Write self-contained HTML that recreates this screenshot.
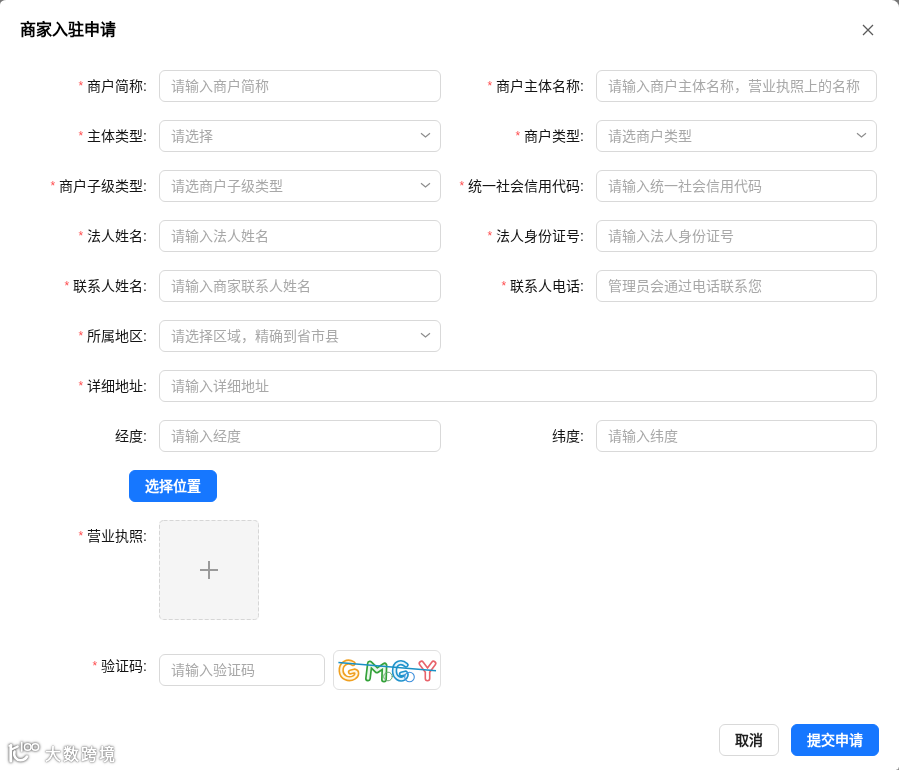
<!DOCTYPE html>
<html lang="zh-CN"><head><meta charset="utf-8">
<style>
*{box-sizing:border-box;margin:0;padding:0}
html,body{width:899px;height:770px;overflow:hidden;background:#fff}
body{position:relative;font-family:"Liberation Sans",sans-serif;font-size:14px;color:#141414}
.corner{position:absolute;width:10px;height:10px;background:#777}
.modal{will-change:transform;position:absolute;left:0;top:0;width:899px;height:770px;background:#fff;border-radius:6.5px 7.5px 0 0 / 4.5px 7.5px 0 0}
.title{position:absolute;left:20px;top:19px;font-size:16px;font-weight:bold;line-height:22px;color:#000}
.close{position:absolute;left:860px;top:22px;width:16px;height:16px}
.lbl{position:absolute;height:32px;line-height:32px;text-align:right;white-space:nowrap}
.lbl .req{color:#ff4d4f;margin-right:4px;font-size:12px;position:relative;top:-1px}
.lbl .c{margin-left:0}
.inp{position:absolute;height:32px;border:1px solid #d9d9d9;border-radius:6px;padding:0 11px;line-height:30px;color:#a8a8a8;white-space:nowrap;overflow:hidden;background:#fff}
.sel svg{position:absolute;left:259.5px;top:11px}
.btn{position:absolute;height:32px;border-radius:6px;line-height:30px;text-align:center;font-weight:bold}
.primary{background:#1677ff;color:#fff;border:1px solid #1677ff}
.default{background:#fff;color:rgba(0,0,0,0.88);border:1px solid #d9d9d9}
.upload{position:absolute;left:159px;top:520px;width:100px;height:100px;border-radius:4px;background:#f5f5f5}
</style></head><body>
<div class="corner" style="left:0;top:0"></div>
<div class="corner" style="right:0;top:0"></div>

<div class="modal">
<div class="title">商家入驻申请</div>
<svg class="close" viewBox="0 0 16 16"><path d="M3 3L13 13M13 3L3 13" stroke="#5a5a5a" stroke-width="1.25" fill="none"/></svg>

<!-- left column -->
<div class="lbl" style="right:752px;top:70px"><span class="req">*</span>商户简称<span class="c">:</span></div>
<div class="inp" style="left:159px;top:70px;width:282px">请输入商户简称</div>

<div class="lbl" style="right:752px;top:120px"><span class="req">*</span>主体类型<span class="c">:</span></div>
<div class="inp sel" style="left:159px;top:120px;width:282px">请选择<svg class="chev" width="11" height="7" viewBox="0 0 11 7"><path d="M1 1.2L5.5 5L10 1.2" stroke="#8c8c8c" stroke-width="1.15" fill="none"/></svg></div>

<div class="lbl" style="right:752px;top:170px"><span class="req">*</span>商户子级类型<span class="c">:</span></div>
<div class="inp sel" style="left:159px;top:170px;width:282px">请选商户子级类型<svg class="chev" width="11" height="7" viewBox="0 0 11 7"><path d="M1 1.2L5.5 5L10 1.2" stroke="#8c8c8c" stroke-width="1.15" fill="none"/></svg></div>

<div class="lbl" style="right:752px;top:220px"><span class="req">*</span>法人姓名<span class="c">:</span></div>
<div class="inp" style="left:159px;top:220px;width:282px">请输入法人姓名</div>

<div class="lbl" style="right:752px;top:270px"><span class="req">*</span>联系人姓名<span class="c">:</span></div>
<div class="inp" style="left:159px;top:270px;width:282px">请输入商家联系人姓名</div>

<div class="lbl" style="right:752px;top:320px"><span class="req">*</span>所属地区<span class="c">:</span></div>
<div class="inp sel" style="left:159px;top:320px;width:282px">请选择区域，精确到省市县<svg class="chev" width="11" height="7" viewBox="0 0 11 7"><path d="M1 1.2L5.5 5L10 1.2" stroke="#8c8c8c" stroke-width="1.15" fill="none"/></svg></div>

<div class="lbl" style="right:752px;top:370px"><span class="req">*</span>详细地址<span class="c">:</span></div>
<div class="inp" style="left:159px;top:370px;width:718px">请输入详细地址</div>

<div class="lbl" style="right:752px;top:420px">经度<span class="c">:</span></div>
<div class="inp" style="left:159px;top:420px;width:282px">请输入经度</div>

<div class="btn primary" style="left:129px;top:470px;width:88px">选择位置</div>

<div class="lbl" style="right:752px;top:520px"><span class="req">*</span>营业执照<span class="c">:</span></div>
<div class="upload"><svg width="100" height="100" style="position:absolute;left:0;top:0"><rect x="0.5" y="0.5" width="99" height="99" rx="4" fill="none" stroke="#d6d6d6" stroke-dasharray="4 2"/></svg><svg width="20" height="20" viewBox="0 0 20 20" style="position:absolute;left:40px;top:40px"><path d="M10 1V19M1 10H19" stroke="#9a9a9a" stroke-width="2" fill="none"/></svg></div>

<div class="lbl" style="right:752px;top:650px"><span class="req">*</span>验证码<span class="c">:</span></div>
<div class="inp" style="left:159px;top:654px;width:166px">请输入验证码</div>
<div style="position:absolute;left:333px;top:650px;width:108px;height:40px;border:1px solid #e0e0e0;border-radius:6px;background:#fff"></div>
<svg style="position:absolute;left:333px;top:650px" width="108" height="40" viewBox="0 0 108 40">
<g fill="none" stroke-linecap="round" stroke-linejoin="round">
<path d="M20 13.5C14.5 10,7.8 13.5,8.2 21C8.6 27.5,15.5 30.5,21 27.5C24.5 25.5,24.5 21.5,21.5 21L17.5 22" stroke="#f0a020" stroke-width="5.4"/>
<path d="M20 13.5C14.5 10,7.8 13.5,8.2 21C8.6 27.5,15.5 30.5,21 27.5C24.5 25.5,24.5 21.5,21.5 21L17.5 22" stroke="#fff6e0" stroke-width="2.2"/>
<path d="M35 28.5L36.8 13.5L44 20.5L51.5 15.5L51 29.5" stroke="#34a23a" stroke-width="6"/>
<path d="M35 28.5L36.8 13.5L44 20.5L51.5 15.5L51 29.5" stroke="#eaf7ea" stroke-width="2.6"/>
<circle cx="55" cy="26.5" r="4.3" stroke="#6aa870" stroke-width="1"/>
<path d="M73 15C68 10.5,61.5 13,61.5 21C61.5 27.5,67 30.5,71 28.2C73 27,73.8 24.5,72.5 23L68.5 24" stroke="#1f93cc" stroke-width="5.4"/>
<path d="M73 15C68 10.5,61.5 13,61.5 21C61.5 27.5,67 30.5,71 28.2C73 27,73.8 24.5,72.5 23L68.5 24" stroke="#e4f4fb" stroke-width="2.2"/>
<circle cx="76.5" cy="27" r="4.8" stroke="#3d8fdc" stroke-width="1.1"/>
<path d="M88.5 13.5L94.5 21.5L100.5 13.5M94.5 21.5V28.5" stroke="#e8626a" stroke-width="6"/>
<path d="M88.5 13.5L94.5 21.5L100.5 13.5M94.5 21.5V28.5" stroke="#fff" stroke-width="2.8"/>
</g>
<path d="M5.4 12.6L103 20.8" stroke="#1a90c4" stroke-width="1.5" fill="none"/>
</svg>

<!-- right column -->
<div class="lbl" style="right:315px;top:70px"><span class="req">*</span>商户主体名称<span class="c">:</span></div>
<div class="inp" style="left:596px;top:70px;width:281px">请输入商户主体名称，营业执照上的名称</div>

<div class="lbl" style="right:315px;top:120px"><span class="req">*</span>商户类型<span class="c">:</span></div>
<div class="inp sel" style="left:596px;top:120px;width:281px">请选商户类型<svg class="chev" style="left:258.5px" width="11" height="7" viewBox="0 0 11 7"><path d="M1 1.2L5.5 5L10 1.2" stroke="#8c8c8c" stroke-width="1.15" fill="none"/></svg></div>

<div class="lbl" style="right:315px;top:170px"><span class="req">*</span>统一社会信用代码<span class="c">:</span></div>
<div class="inp" style="left:596px;top:170px;width:281px">请输入统一社会信用代码</div>

<div class="lbl" style="right:315px;top:220px"><span class="req">*</span>法人身份证号<span class="c">:</span></div>
<div class="inp" style="left:596px;top:220px;width:281px">请输入法人身份证号</div>

<div class="lbl" style="right:315px;top:270px"><span class="req">*</span>联系人电话<span class="c">:</span></div>
<div class="inp" style="left:596px;top:270px;width:281px">管理员会通过电话联系您</div>

<div class="lbl" style="right:315px;top:420px">纬度<span class="c">:</span></div>
<div class="inp" style="left:596px;top:420px;width:281px">请输入纬度</div>

<div class="btn default" style="left:719px;top:724px;width:60px;font-weight:600">取消</div>
<div class="btn primary" style="left:791px;top:724px;width:88px">提交申请</div>
<div class="wm" style="position:absolute;left:0;top:732px;width:140px;height:38px">
<svg width="44" height="38" viewBox="0 0 44 38" style="position:absolute;left:0;top:0;filter:drop-shadow(0 0 1px rgba(0,0,0,0.5)) drop-shadow(0 0 1.5px rgba(0,0,0,0.45))">
<g fill="none" stroke="#fff" stroke-linecap="round">
<path d="M10.8 13.5V29" stroke-width="3"/>
<path d="M9 14L11.5 13" stroke-width="1.5"/>
<path d="M12.5 17L17.7 14.5" stroke-width="2.2"/>
<path d="M14.5 19.5C13.2 24.5 16.5 28.5 20.5 28.3C23.5 28.2 25.8 26.5 27 24.5" stroke-width="2.6"/>
<path d="M21.7 10.5V19" stroke-width="1.7"/>
<circle cx="27.7" cy="15" r="3.3" stroke-width="1.6"/>
<circle cx="35.3" cy="15" r="3.3" stroke-width="1.6"/>
</g></svg>
<div style="position:absolute;left:45px;top:13px;font-size:16px;line-height:20px;font-weight:bold;letter-spacing:2px;color:#fff;text-shadow:0 0 1px rgba(0,0,0,0.6),0 0 2.5px rgba(0,0,0,0.55)">大数跨境</div>
</div>
</div>
<div style="position:absolute;z-index:5;right:0;bottom:0;width:3px;height:3px;background:radial-gradient(circle at 0 0,#fff 2.2px,#888 3.2px)"></div>
</body></html>
